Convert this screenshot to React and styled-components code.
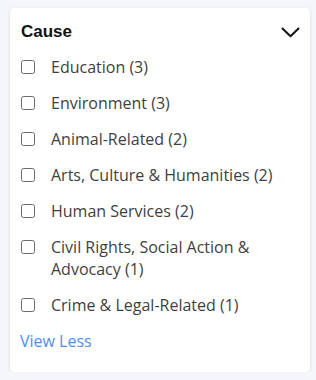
import React, { useState } from "react"
import styled, { createGlobalStyle } from "styled-components"

const GlobalStyle = createGlobalStyle`
  html, body {
    margin: 0;
    padding: 0;
    background: #f4f6f9;
  }
  * {
    box-sizing: border-box;
  }
`

const Card = styled.section`
  width: 300px;
  height: 364px;
  margin: 8px 0 0 10px;
  padding: 12px 10px 0 10px;
  background: #fff;
  border-radius: 4px;
  box-shadow: 0 1px 3px rgba(30, 40, 60, 0.14);
`

const Header = styled.div`
  display: flex;
  align-items: center;
  justify-content: space-between;
  height: 24px;
  margin-bottom: 5px;
  padding: 0 0 0 1px;
`

const Title = styled.h3`
  margin: 0;
  font-family: "Liberation Sans", Arial, sans-serif;
  font-size: 17px;
  font-weight: 700;
  line-height: 24px;
  color: #111;
`

const Toggle = styled.button`
  display: flex;
  align-items: center;
  padding: 0;
  margin-right: 0;
  border: 0;
  background: none;
  cursor: pointer;
`

const List = styled.ul`
  list-style: none;
  margin: 0;
  padding: 0;
`

const Row = styled.li`
  display: flex;
  align-items: flex-start;
  padding: 7px 0;
`

const Box = styled.span`
  flex: none;
  width: 14px;
  height: 14px;
  margin: 4px 16px 0 1px;
  border: 1.5px solid #6b6b6b;
  border-radius: 2.5px;
  background: ${({ checked }) => (checked ? "#4a8cf0" : "#fff")};
`

const Label = styled.span`
  font-family: "Open Sans", sans-serif;
  font-size: 16px;
  line-height: 22px;
  color: #3f3f3f;
  padding-right: 14px;
`

const ViewLess = styled.a`
  display: block;
  padding: 7px 0 7px 0;
  font-family: "Open Sans", sans-serif;
  font-size: 16px;
  line-height: 22px;
  color: #4e8ef2;
  cursor: pointer;
`

const causes = [
  "Education (3)",
  "Environment (3)",
  "Animal-Related (2)",
  "Arts, Culture & Humanities (2)",
  "Human Services (2)",
  "Civil Rights, Social Action & Advocacy (1)",
  "Crime & Legal-Related (1)",
]

const Chevron = () => (
  <svg width="19" height="11" viewBox="0 0 19 11">
    <polyline points="1.5,1.5 9.5,9.2 17.5,1.5" fill="none" stroke="#111" strokeWidth="2" strokeLinecap="round" strokeLinejoin="round" />
  </svg>
)

const App = () => {
  const [checked, setChecked] = useState({})

  return (
    <>
      <GlobalStyle />
      <Card>
        <Header>
          <Title>Cause</Title>
          <Toggle>
            <Chevron />
          </Toggle>
        </Header>
        <List>
          {causes.map((cause) => (
            <Row key={cause} onClick={() => setChecked({ ...checked, [cause]: !checked[cause] })}>
              <Box checked={checked[cause]} />
              <Label>{cause}</Label>
            </Row>
          ))}
        </List>
        <ViewLess>View Less</ViewLess>
      </Card>
    </>
  )
}

export default App
